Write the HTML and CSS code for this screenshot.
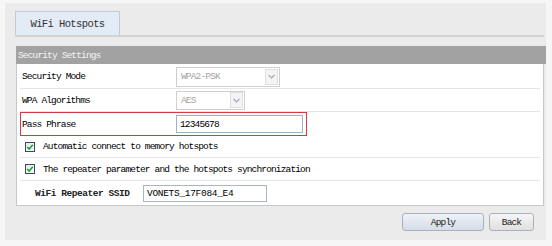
FILE: index.html
```html
<!DOCTYPE html>
<html>
<head>
<meta charset="utf-8">
<link rel="stylesheet" href="styles.css">
</head>
<body>
<div class="panel">
  <div class="tabstrip">
    <div class="tab">WiFi Hotspots</div>
  </div>
  <div class="section">
    <div class="section-head">Security Settings</div>
    <div class="box">
      <div class="row r1">
        <div class="label">Security Mode</div>
        <div class="select w1"><span class="sel-text">WPA2-PSK</span><span class="sel-btn"><svg width="7" height="5" viewBox="0 0 7 5"><path d="M0.5 0.8 L3.5 3.8 L6.5 0.8" fill="none" stroke="#9aa6b4" stroke-width="1.2"/></svg></span></div>
      </div>
      <div class="row r2">
        <div class="label">WPA Algorithms</div>
        <div class="select w2"><span class="sel-text">AES</span><span class="sel-btn"><svg width="7" height="5" viewBox="0 0 7 5"><path d="M0.5 0.8 L3.5 3.8 L6.5 0.8" fill="none" stroke="#9aa6b4" stroke-width="1.2"/></svg></span></div>
      </div>
      <div class="row r3">
        <div class="hl">
          <div class="label">Pass Phrase</div>
          <div class="input w3">12345678</div>
        </div>
      </div>
      <div class="row r4 check-row">
        <span class="cb"><svg width="10" height="10" viewBox="0 0 10 10"><defs><linearGradient id="g1" x1="0" y1="0" x2="1" y2="1"><stop offset="0" stop-color="#dfe6ee"/><stop offset="1" stop-color="#ffffff"/></linearGradient></defs><rect x="0.5" y="0.5" width="9" height="9" fill="url(#g1)" stroke="#3c4a58"/><path d="M2.2 5 L4.2 7 L7.8 2.8" fill="none" stroke="#21a12a" stroke-width="1.6"/></svg></span>
        <span class="cb-text">Automatic connect to memory hotspots</span>
      </div>
      <div class="row r5 check-row">
        <span class="cb"><svg width="10" height="10" viewBox="0 0 10 10"><rect x="0.5" y="0.5" width="9" height="9" fill="url(#g1)" stroke="#3c4a58"/><path d="M2.2 5 L4.2 7 L7.8 2.8" fill="none" stroke="#21a12a" stroke-width="1.6"/></svg></span>
        <span class="cb-text">The repeater parameter and the hotspots synchronization</span>
      </div>
      <div class="row r6 last">
        <div class="label2">WiFi Repeater SSID</div>
        <div class="input w4">VONETS_17F084_E4</div>
      </div>
    </div>
  </div>
  <div class="buttons">
    <button class="btn apply">Apply</button>
    <button class="btn back">Back</button>
  </div>
</div>
</body>
</html>
```
FILE: styles.css
```css
html, body {
  margin: 0;
  padding: 0;
}
body {
  background: #f6f6f6;
  width: 552px;
  height: 246px;
  overflow: hidden;
  font-family: "Liberation Mono", "DejaVu Sans Mono", monospace;
  font-size: 9.5px;
  letter-spacing: -0.85px;
  color: #000;
}
.panel {
  margin: 3px 6px 0 5px;
  height: 237px;
  background: #ebebeb;
  padding: 8px 0 0 10px;
  box-sizing: border-box;
}
.tabstrip {
  width: 529px;
  border-bottom: 2px solid #d2d2d2;
  display: flex;
}
.tab {
  width: 105px;
  height: 24px;
  box-sizing: border-box;
  background: #e3ebf7;
  border: 1px solid #c2cad6;
  border-bottom: none;
  display: flex;
  align-items: center;
  justify-content: center;
  font-size: 10.5px;
  letter-spacing: -0.6px;
  color: #333;
}
.section {
  margin-top: 9px;
  margin-left: 1px;
  width: 530px;
}
.section-head {
  height: 18px;
  background: #a2a2a2;
  color: #f4f4f4;
  display: flex;
  align-items: center;
  padding-left: 2px;
}
.box {
  width: 528px;
  box-sizing: border-box;
  background: #fff;
  border: 1px solid #c8c8c8;
  border-top: none;
  padding: 1px 3px 0 3px;
}
.row {
  display: flex;
  align-items: center;
  border-bottom: 1px solid #e6e6e6;
  box-sizing: border-box;
}
.row.last { border-bottom: none; }
.r1 { height: 24px; }
.r2 { height: 23px; }
.r3 { height: 24px; border-bottom: none; }
.r4 { height: 22px; }
.r5 { height: 23px; }
.r6 { height: 24px; }
.label {
  width: 156px;
  padding-left: 2px;
  box-sizing: border-box;
  flex: none;
}
.hl {
  width: 287px;
  height: 24px;
  box-sizing: border-box;
  border: 1px solid #d23c3c;
  display: flex;
  align-items: center;
}
.hl .label { width: 155px; padding-left: 1px; }
.select {
  height: 20px;
  box-sizing: border-box;
  border: 1px solid #cfcfcf;
  background: #fff;
  display: flex;
  align-items: center;
  justify-content: space-between;
  color: #a4a4a4;
  padding-left: 4px;
}
.w1 { width: 104px; }
.w2 { width: 69px; height: 19px; }
.sel-btn {
  width: 13px;
  height: 16px;
  margin-right: 1px;
  border: 1px solid #e0e0e0;
  box-sizing: border-box;
  background: #f4f4f4;
  display: flex;
  align-items: center;
  justify-content: center;
}
.input {
  height: 18px;
  box-sizing: border-box;
  border: 1px solid #9fb3c8;
  display: flex;
  align-items: center;
  padding-left: 3px;
  color: #000;
  background: #fff;
}
.w3 { width: 127px; }
.w4 { width: 124px; height: 17px; border-color: #a9b6c4; letter-spacing: -0.3px; }
.check-row { padding-left: 5px; }
.cb {
  width: 10px;
  height: 10px;
  display: flex;
  margin-right: 8px;
}
.label2 {
  padding-left: 15px;
  width: 123px;
  box-sizing: border-box;
  font-weight: bold;
  letter-spacing: -0.45px;
  color: #222;
}
.buttons {
  display: flex;
  justify-content: flex-end;
  gap: 5px;
  width: 519px;
  margin-top: 7px;
}
.btn {
  height: 18px;
  box-sizing: border-box;
  border: 1px solid #a9b1bd;
  border-radius: 3px;
  font-family: "Liberation Mono", "DejaVu Sans Mono", monospace;
  font-size: 9.5px;
  letter-spacing: -0.85px;
  color: #222;
  padding: 0;
}
.apply {
  width: 82px;
  background: linear-gradient(#eef2f7, #d6dde7);
}
.back {
  width: 45px;
  background: linear-gradient(#f6f6f6, #e0e0e0);
}
```
